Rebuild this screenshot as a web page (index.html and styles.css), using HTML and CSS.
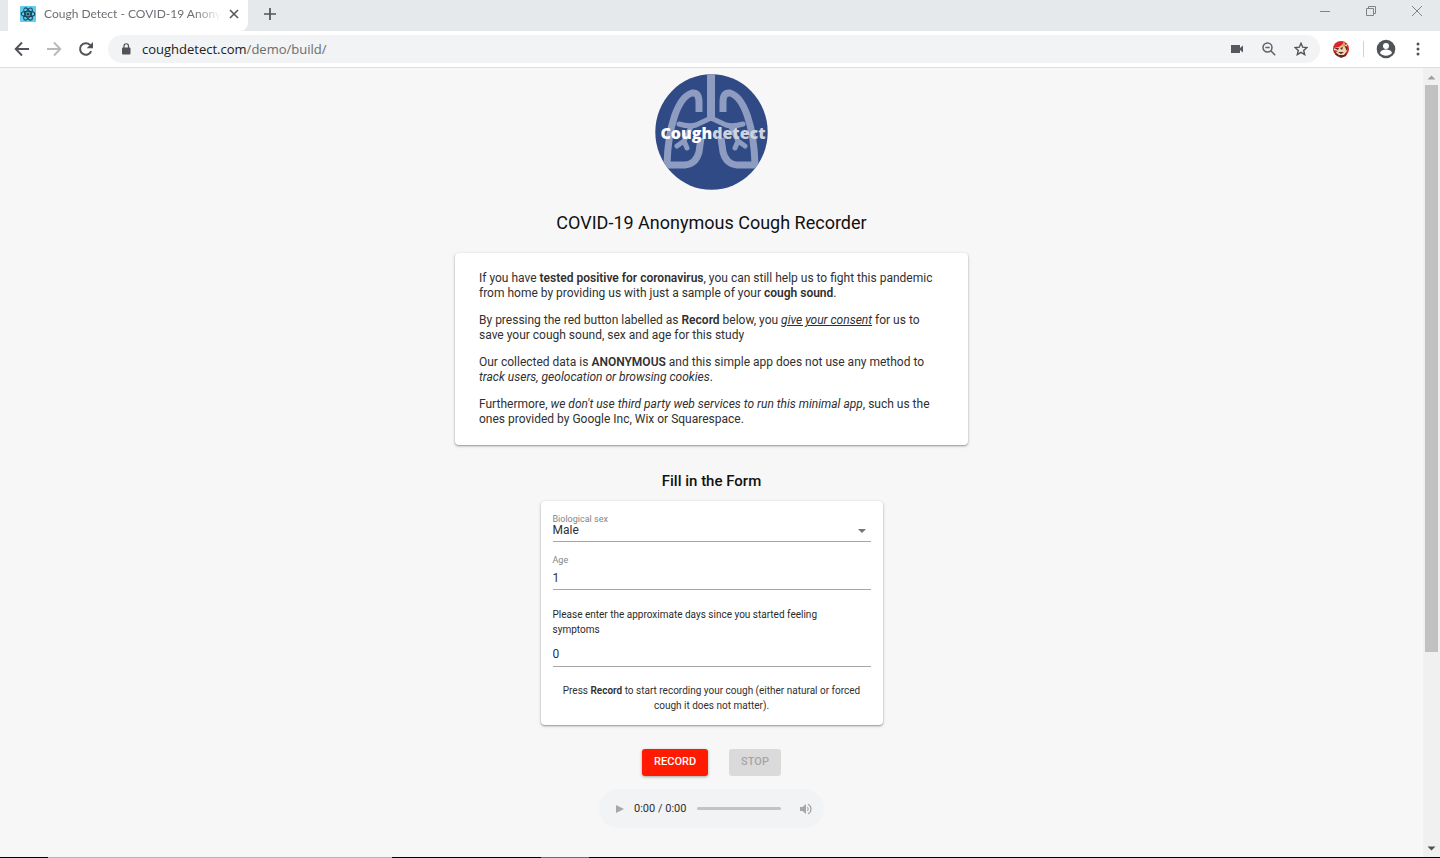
FILE: index.html
```html
<!DOCTYPE html>
<html lang="en">
<head>
<meta charset="utf-8">
<meta name="viewport" content="width=device-width, initial-scale=1">
<title>Cough Detect - COVID-19 Anonymous Cough Recorder</title>
<link rel="stylesheet" href="styles.css">
</head>
<body>
<div class="window">
  <header class="tabstrip">
    <div class="tab">
      <svg class="favicon" width="16" height="16" viewBox="0 0 16 16"><rect width="16" height="16" rx="1" fill="#5ecdf0"/><g fill="none" stroke="#1d4152" stroke-width="1.1"><ellipse cx="8" cy="8" rx="6.8" ry="2.7"/><ellipse cx="8" cy="8" rx="6.8" ry="2.7" transform="rotate(60 8 8)"/><ellipse cx="8" cy="8" rx="6.8" ry="2.7" transform="rotate(120 8 8)"/></g><circle cx="8" cy="8" r="1.5" fill="#1d4152"/></svg>
      <span class="tab-title">Cough Detect - COVID-19 Anony</span>
      <button class="icon-button" aria-label="Close tab"><svg width="10" height="10" viewBox="0 0 10 10"><path d="M1 1l8 8M9 1L1 9" stroke="#55585c" stroke-width="1.6"/></svg></button>
    </div>
    <button class="icon-button new-tab" aria-label="New tab"><svg width="12" height="12" viewBox="0 0 12 12"><path d="M6 0v12M0 6h12" stroke="#505357" stroke-width="1.7"/></svg></button>
    <div class="window-buttons">
      <button class="icon-button" aria-label="Minimize"><svg width="12" height="12" viewBox="0 0 12 12"><path d="M1 6.5h10" stroke="#808387"/></svg></button>
      <button class="icon-button" aria-label="Restore"><svg width="12" height="12" viewBox="0 0 12 12"><path d="M1.500 3.500h7v7h-7zM3.500 3.500v-2h7v7h-2" fill="none" stroke="#808387"/></svg></button>
      <button class="icon-button" aria-label="Close"><svg width="12" height="12" viewBox="0 0 12 12"><path d="M1 1l10 10M11 1L1 11" stroke="#808387"/></svg></button>
    </div>
  </header>
  <nav class="toolbar">
    <button class="icon-button" aria-label="Back"><svg width="16" height="16" viewBox="0 0 16 16"><path d="M15 8H2M8 1.500L1.700 8 8 14.500" fill="none" stroke="#505357" stroke-width="1.900"/></svg></button>
    <button class="icon-button" aria-label="Forward"><svg width="16" height="16" viewBox="0 0 16 16"><path d="M1 8h13M8 1.500L14.300 8 8 14.500" fill="none" stroke="#b7b9bb" stroke-width="1.900"/></svg></button>
    <button class="icon-button" aria-label="Reload"><svg width="16" height="16" viewBox="0 0 16 16"><path d="M13.200 10.200A5.800 5.800 0 1 1 12 3.900L13.500 5.400" fill="none" stroke="#505357" stroke-width="2"/><path d="M15 1v6.300H8.700z" fill="#505357"/></svg></button>
    <div class="address">
      <svg width="10" height="12" viewBox="0 0 10 12"><rect x="1" y="4.500" width="8.500" height="7" rx="1" fill="#505357"/><path d="M3 5V3a2.200 2.200 0 0 1 4.500 0v2" fill="none" stroke="#505357" stroke-width="1.200"/></svg>
      <p class="url">coughdetect.com<span class="path">/demo/build/</span></p>
      <button class="icon-button" aria-label="Camera"><svg width="14" height="12" viewBox="0 0 14 12"><path d="M1 2h9v3l3-2.500v7L10 7v3H1z" fill="#55585c"/></svg></button>
      <button class="icon-button" aria-label="Zoom"><svg width="14" height="14" viewBox="0 0 14 14"><circle cx="5.500" cy="5.500" r="4.500" fill="none" stroke="#606367" stroke-width="1.500"/><path d="M3.300 5.500h4.400M8.800 8.800l4.400 4.400" stroke="#606367" stroke-width="1.600"/></svg></button>
      <button class="icon-button" aria-label="Bookmark"><svg width="14" height="14" viewBox="0 0 14 14"><path d="M7 1.300l1.700 3.900 4.200.4-3.200 2.800 1 4.200L7 10.400l-3.700 2.200 1-4.200L1.100 5.600l4.200-.4z" fill="none" stroke="#505357" stroke-width="1.400"/></svg></button>
    </div>
    <button class="icon-button extension" aria-label="Extension"><svg width="18" height="18" viewBox="0 0 18 18"><circle cx="9" cy="9" r="8" fill="#df2327"/><path d="M2 8l5-1 3-2 2-3 1 3 3-1-2 3 1 4-3 4-5 1-4-3 3-2-4-1z" fill="#e7d9b8"/><path d="M2 8l5 0-1 2zM8 8l3-1-1 3zM6 12l6 0-3 2M2 11l5 4 5 0 3-3-1 4-5 2-5-3zM12 5l3 2 0 4z" fill="#622b20"/><path d="M10 6l2-4 1 2-2 3z" fill="#e69b3a"/></svg></button>
    <span class="divider"></span>
    <button class="icon-button profile" aria-label="Profile"><svg width="20" height="20" viewBox="0 0 20 20"><circle cx="10" cy="10" r="9.300" fill="#505357"/><circle cx="10" cy="6.900" r="3" fill="#fff"/><path d="M4 14c.2-2.500 4-3.500 6-3.500s5.800 1 6 3.500c-3 3.500-9 3.500-12 0z" fill="#fff"/></svg></button>
    <button class="icon-button menu" aria-label="Menu"><svg width="4" height="14" viewBox="0 0 4 14" fill="#505357"><circle cx="2" cy="2" r="1.500"/><circle cx="2" cy="7" r="1.500"/><circle cx="2" cy="12" r="1.500"/></svg></button>
  </nav>
  <div class="viewport">
    <main class="page">
      <svg class="logo" width="113" height="116" viewBox="0 0 113 116" role="img" aria-label="Coughdetect">
        <defs><clipPath id="disc"><ellipse cx="56.500" cy="58" rx="56.200" ry="57.800"/></clipPath></defs>
        <ellipse cx="56.500" cy="58" rx="56.200" ry="57.800" fill="#2f4a85"/>
        <g clip-path="url(#disc)" fill="none" stroke="#8d9cc0" stroke-linejoin="round">
          <path d="M56 0v47" stroke-width="8"/>
          <path d="M56 44L41 51Q34 53 24 50M56 44l15 7q7 2 17-1" stroke-width="5" stroke-linecap="round"/>
          <path d="M44 38V28Q44 18 37 19C23 23 13 52 12 91H30Q41 90 44 78L46 64M68 38V28q0-10 7-9c14 4 24 33 25 72H82Q71 90 68 78L66 64" stroke-width="7"/>
          <path d="M36 53L29 67 22 72M29 67L32 74M76 53l7 14 7 5M83 67l-3 7" stroke-width="5" stroke-linecap="round"/>
        </g>
        <text class="wordmark" x="58" y="65" text-anchor="middle" fill="#fff">Cough<tspan fill="#ced4df">detect</tspan></text>
      </svg>
      <h1 class="title">COVID-19 Anonymous Cough Recorder</h1>
      <section class="card intro">
        <p>If you have <b>tested positive for coronavirus</b>, you can still help us to fight this pandemic<br>from home by providing us with just a sample of your <b>cough sound</b>.</p>
        <p>By pressing the red button labelled as <b>Record</b> below, you <a href="#consent">give your consent</a> for us to<br>save your cough sound, sex and age for this study</p>
        <p>Our collected data is <b>ANONYMOUS</b> and this simple app does not use any method to<br><i>track users, geolocation or browsing cookies</i>.</p>
        <p>Furthermore, <i>we don't use third party web services to run this minimal app</i>, such us the<br>ones provided by Google Inc, Wix or Squarespace.</p>
      </section>
      <h2 class="form-title">Fill in the Form</h2>
      <form class="card form">
        <div class="field field-sex">
          <label for="sex">Biological sex</label>
          <div class="select-wrap">
            <select id="sex"><option>Male</option><option>Female</option></select>
            <svg width="8" height="4" viewBox="0 0 8 4"><path d="M0 0h8L4 4z" fill="#757575"/></svg>
          </div>
        </div>
        <div class="field field-age">
          <label for="age">Age</label>
          <input id="age" type="text" inputmode="numeric" value="1">
        </div>
        <div class="field field-days">
          <label class="question" for="days">Please enter the approximate days since you started feeling<br>symptoms</label>
          <input id="days" type="text" inputmode="numeric" value="0">
        </div>
        <p class="hint">Press <b>Record</b> to start recording your cough (either natural or forced<br>cough it does not matter).</p>
      </form>
      <div class="actions">
        <button class="action record">RECORD</button>
        <button class="action stop" disabled>STOP</button>
      </div>
      <div class="player">
        <button class="icon-button" aria-label="Play"><svg width="8" height="10" viewBox="0 0 8 10"><path d="M0 1l8 4-8 4z" fill="#a6a7a9"/></svg></button>
        <span class="time">0:00 / 0:00</span>
        <span class="track"></span>
        <button class="icon-button" aria-label="Mute"><svg width="12" height="12" viewBox="0 0 12 12"><path d="M0 4h2.500L6 1v10L2.500 8H0z" fill="#a6a7a9"/><path d="M7.500 4q1.500 2 0 4M8 1.200Q11 2.500 11 6T8 10.800" fill="none" stroke="#a6a7a9" stroke-width="1.200"/></svg></button>
      </div>
    </main>
    <div class="scrollbar">
      <svg width="9" height="5" viewBox="0 0 9 5"><path d="M.5 4.500h8L4.500.5z" fill="#a0a0a0"/></svg>
      <div class="scroll-track"><div class="thumb"></div></div>
      <svg width="9" height="5" viewBox="0 0 9 5"><path d="M.5.5h8L4.500 4.500z" fill="#505050"/></svg>
    </div>
  </div>
  <footer class="taskbar"><span class="task-search"></span><span class="task-active"></span></footer>
</div>
</body>
</html>
```
FILE: styles.css
```css
* { box-sizing: border-box; }
body { margin: 0; background: #f7f7f7; font-family: Roboto, "Liberation Sans", sans-serif; color: #303030; }
p, h1, h2 { margin: 0; }
svg { display: block; flex: none; }
button, input, select { font: inherit; color: inherit; }
.window { display: flex; flex-direction: column; min-height: 100vh; }

.icon-button { display: flex; align-items: center; justify-content: center; padding: 0; border: 0; background: none; flex: none; }
.tabstrip { display: flex; height: 31px; padding-left: 8px; background: #e5e9ec; }
.tab { display: flex; align-items: center; width: 240px; padding: 0 11px 3px 12px; border-radius: 0 0 8px 0; background: #fff; font: 12px/16px Lato, sans-serif; color: #6c6f73; }
.tab-title { flex: 1; margin: 0 8px; white-space: nowrap; mask-image: linear-gradient(to right, #000 85%, transparent); }
.new-tab { margin: 0 0 3px 16px; }
.window-buttons { display: flex; gap: 34px; margin-left: auto; padding: 0 17px 9px 0; }

.toolbar { display: flex; align-items: center; height: 37px; padding: 0 20px 0 14px; gap: 16px; border-bottom: 1px solid #dcdee0; background: #fff; }
.address { display: flex; align-items: center; flex: 1; gap: 18px; height: 28px; margin-left: -2px; padding: 0 12px 0 13px; border-radius: 14px; background: #f1f3f4; }
.url { flex: 1; margin-left: -7px; font: 13px/20px "Open Sans", sans-serif; color: #202124; }
.path { color: #6a6d71; }
.extension { margin-left: -4px; }
.divider { width: 1px; height: 16px; margin-left: -3px; background: #d0d2d4; }
.profile { margin-left: -4px; }
.menu { margin-left: 4px; }

.viewport { display: flex; flex: 1; }
.page { display: flex; flex-direction: column; align-items: center; flex: 1; padding: 6px 16px 29px; }
.wordmark { font: 800 16px "Open Sans", sans-serif; }
.title { margin: 21px 0 18px; font-size: 18px; font-weight: 400; line-height: 24px; color: #111; }
.card { border-radius: 4px; background: #fff; box-shadow: 0 1px 3px rgba(0,0,0,.3), 0 1px 1px rgba(0,0,0,.16); }
.intro { display: flex; flex-direction: column; gap: 12px; width: 100%; max-width: 513px; padding: 18px 24px; font-size: 12px; line-height: 15px; }
.intro b, .hint b { font-weight: 600; }
.intro a { color: inherit; font-style: italic; }
.form-title { margin: 26px 0 10px; font-size: 15px; font-weight: 500; line-height: 20px; color: #111; }

.form { display: flex; flex-direction: column; width: 100%; max-width: 342px; padding: 12px; }
.field { display: flex; flex-direction: column; font-size: 12px; }
.field label { font-size: 9px; line-height: 12px; color: #858585; }
.field .question { font-size: 10px; line-height: 15px; color: #2a2a2a; }
.field input, .field select { width: 100%; border: 0; border-bottom: 1px solid #a5a5a5; border-radius: 0; padding: 0; background: none; outline: none; }
.select-wrap { position: relative; }
.field select { display: block; appearance: none; height: 17px; padding: 0 24px 5px 0; line-height: 11px; }
.select-wrap svg { position: absolute; right: 5px; top: 4px; pointer-events: none; }
.field-age { margin-top: 12px; }
.field input { height: 24px; }
.field-days { margin-top: 17px; }
.field-days input { margin-top: 5px; height: 25px; }
.hint { margin-top: 16px; font-size: 10px; line-height: 15px; text-align: center; }

.actions { display: flex; gap: 21px; margin-top: 24px; }
.action { height: 27px; border: 0; border-radius: 3px; padding: 0 12px 2px; font-size: 11px; font-weight: 500; }
.record { background: #ff1a00; color: #fff; box-shadow: 0 1px 3px rgba(0,0,0,.35); }
.stop { background: #dadada; color: #a6a6a6; }
.player { display: flex; align-items: center; width: 225px; height: 39px; margin-top: 13px; padding: 0 12px 0 17px; border-radius: 20px; background: #f1f3f4; font-size: 11px; }
.time { margin: 0 11px 0 10px; }
.track { flex: 1; height: 3px; margin-right: 19px; border-radius: 2px; background: #c2c3c4; }

.scrollbar { display: flex; flex-direction: column; align-items: center; justify-content: space-between; width: 17px; padding: 7px 0 6px; background: #f0f0f0; }
.scroll-track { flex: 1; width: 13px; margin: 5px 0; }
.thumb { height: 75%; background: #c1c1c1; }
.taskbar { display: flex; height: 1px; padding-left: 48px; background: #000; }
.task-search { width: 344px; background: #b5b5b5; }
.task-active { width: 48px; margin-left: 149px; background: #8d6546; }
```
